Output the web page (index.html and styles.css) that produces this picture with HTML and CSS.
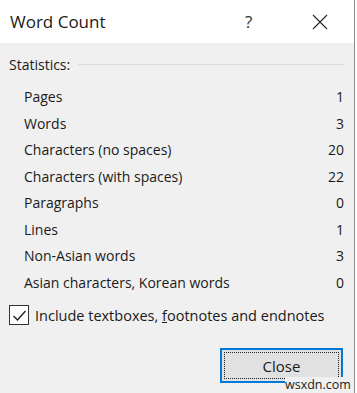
FILE: index.html
```html
<!DOCTYPE html>
<html lang="en">
<head>
  <meta charset="UTF-8">
  <title>Word Count</title>
  <link rel="stylesheet" href="styles.css">
</head>
<body>
  <div class="dialog">
    <div class="titlebar">
      <span class="title">Word Count</span>
      <span class="help">?</span>
      <span class="close-x">
        <svg width="16" height="16" viewBox="0 0 16 16"><path d="M1 1 L15 15 M15 1 L1 15" stroke="#222" stroke-width="1.1" fill="none"/></svg>
      </span>
    </div>

    <div class="content">
      <div class="group-head">
        <span>Statistics:</span>
        <span class="group-line"></span>
      </div>

      <div class="stats">
        <div class="stat"><span>Pages</span><span>1</span></div>
        <div class="stat"><span>Words</span><span>3</span></div>
        <div class="stat"><span>Characters (no spaces)</span><span>20</span></div>
        <div class="stat"><span>Characters (with spaces)</span><span>22</span></div>
        <div class="stat"><span>Paragraphs</span><span>0</span></div>
        <div class="stat"><span>Lines</span><span>1</span></div>
        <div class="stat"><span>Non-Asian words</span><span>3</span></div>
        <div class="stat"><span>Asian characters, Korean words</span><span>0</span></div>
      </div>

      <label class="check-row">
        <span class="checkbox">
          <svg width="15" height="15" viewBox="0 0 15 15"><path d="M1.5 8 L5.5 12 L13.5 3" stroke="#222" stroke-width="1.4" fill="none"/></svg>
        </span>
        <span>Include textboxes, <u>f</u>ootnotes and endnotes</span>
      </label>

      <div class="buttons">
        <button class="btn">Close</button>
      </div>
    </div>
    <span class="watermark">wsxdn.com</span>
  </div>
</body>
</html>
```

FILE: styles.css
```css
body {
  margin: 0;
  background: #fff;
  font-family: "Open Sans", "Noto Sans", sans-serif;
  color: #1a1a1a;
}
.dialog {
  position: relative;
  width: 354px;
  height: 393px;
  border-right: 1px solid #8c8c8c;
  background: #f0f0f0;
  overflow: hidden;
}
.titlebar {
  display: flex;
  align-items: center;
  height: 43px;
  background: #fff;
}
.title {
  font-size: 17px;
  padding-left: 10px;
  flex: 1;
}
.help {
  font-size: 17px;
  width: 20px;
  margin-right: 47px;
  color: #333;
}
.close-x {
  display: flex;
  width: 16px;
  margin-right: 26px;
}
.content {
  padding: 10px 10px 0 9px;
}
.group-head {
  display: flex;
  align-items: center;
  font-size: 14px;
  height: 22px;
}
.group-line {
  flex: 1;
  margin-left: 8px;
  border-top: 1px solid #dcdcdc;
}
.stats {
  padding: 9px 0 0 15px;
}
.stat {
  display: flex;
  justify-content: space-between;
  height: 26.5px;
  line-height: 26.5px;
  font-size: 14px;
}
.check-row {
  display: flex;
  align-items: center;
  gap: 6px;
  margin-top: 9px;
  font-size: 14.5px;
}
.checkbox {
  display: flex;
  align-items: center;
  justify-content: center;
  width: 18px;
  height: 18px;
  border: 1px solid #333;
  background: #fff;
}
.buttons {
  display: flex;
  justify-content: flex-end;
  margin-top: 23px;
}
.btn {
  width: 123px;
  height: 35px;
  margin-right: 1px;
  font-family: inherit;
  font-size: 15px;
  color: #1a1a1a;
  background: #e1e1e1;
  border: 2px solid #0078d7;
  outline: 1px dotted #222;
  outline-offset: -5px;
}
.watermark {
  position: absolute;
  left: 285px;
  top: 377px;
  font-size: 12.5px;
  color: #222;
  background: #f0f0f0;
  line-height: 15px;
}
```
